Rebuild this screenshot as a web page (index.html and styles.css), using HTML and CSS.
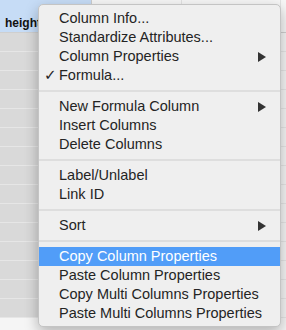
FILE: index.html
```html
<!DOCTYPE html>
<html>
<head>
    <title>Column Menu</title>
    <link rel="stylesheet" href="styles.css">
</head>
<body>
    <div class="sheet">
        <div class="row head">
            <div class="cell col-height selected">height</div>
            <div class="cell col-b"></div>
            <div class="cell col-c"></div>
            <div class="cell col-d"></div>
        </div>
        <div class="row"><div class="cell col-height"></div><div class="cell col-b"></div><div class="cell col-c"></div><div class="cell col-d"></div></div>
        <div class="row"><div class="cell col-height"></div><div class="cell col-b"></div><div class="cell col-c"></div><div class="cell col-d"></div></div>
        <div class="row"><div class="cell col-height"></div><div class="cell col-b"></div><div class="cell col-c"></div><div class="cell col-d"></div></div>
        <div class="row"><div class="cell col-height"></div><div class="cell col-b"></div><div class="cell col-c"></div><div class="cell col-d"></div></div>
        <div class="row"><div class="cell col-height"></div><div class="cell col-b"></div><div class="cell col-c"></div><div class="cell col-d"></div></div>
        <div class="row"><div class="cell col-height"></div><div class="cell col-b"></div><div class="cell col-c"></div><div class="cell col-d"></div></div>
        <div class="row"><div class="cell col-height"></div><div class="cell col-b"></div><div class="cell col-c"></div><div class="cell col-d"></div></div>
        <div class="row"><div class="cell col-height"></div><div class="cell col-b"></div><div class="cell col-c"></div><div class="cell col-d"></div></div>
        <div class="row"><div class="cell col-height"></div><div class="cell col-b"></div><div class="cell col-c"></div><div class="cell col-d"></div></div>
        <div class="row"><div class="cell col-height"></div><div class="cell col-b"></div><div class="cell col-c"></div><div class="cell col-d"></div></div>
        <div class="row"><div class="cell col-height"></div><div class="cell col-b"></div><div class="cell col-c"></div><div class="cell col-d"></div></div>
        <div class="row"><div class="cell col-height"></div><div class="cell col-b"></div><div class="cell col-c"></div><div class="cell col-d"></div></div>
        <div class="row"><div class="cell col-height"></div><div class="cell col-b"></div><div class="cell col-c"></div><div class="cell col-d"></div></div>
        <div class="row"><div class="cell col-height"></div><div class="cell col-b"></div><div class="cell col-c"></div><div class="cell col-d"></div></div>
        <div class="row"><div class="cell col-height value">142</div><div class="cell col-b"></div><div class="cell col-c"></div><div class="cell col-d"></div></div>
    </div>

    <!-- context menu over the column header -->
    <ul class="menu">
        <li class="item">Column Info...</li>
        <li class="item">Standardize Attributes...</li>
        <li class="item sub">Column Properties</li>
        <li class="item checked">Formula...</li>
        <li class="sep"></li>
        <li class="item sub">New Formula Column</li>
        <li class="item">Insert Columns</li>
        <li class="item">Delete Columns</li>
        <li class="sep"></li>
        <li class="item">Label/Unlabel</li>
        <li class="item">Link ID</li>
        <li class="sep"></li>
        <li class="item sub">Sort</li>
        <li class="sep"></li>
        <li class="item active">Copy Column Properties</li>
        <li class="item">Paste Column Properties</li>
        <li class="item">Copy Multi Columns Properties</li>
        <li class="item">Paste Multi Columns Properties</li>
    </ul>
</body>
</html>
```

FILE: styles.css
```css
/* spreadsheet behind the menu */
body {
    margin: 0;
    padding: 0;
    background: #f5f5f5;
    font-family: "Liberation Sans", Arial, sans-serif;
    overflow: hidden;
}

.sheet {
    width: 300px;
}

.row {
    display: flex;
    height: 19px;
    box-sizing: border-box;
    border-bottom: 1px solid #e6e6e6;
}

.row.head {
    height: 33px;
    border-bottom: 1px solid #cfcfcf;
}

.cell {
    box-sizing: border-box;
    border-right: 1px solid #e2e2e2;
}

.col-height {
    width: 92px;
    background: #d9d9d9;
    border-right-color: #cdcdcd;
}

.col-b {
    width: 90px;
}

.col-c {
    width: 99px;
}

.col-d {
    flex: 1;
}

.head .cell {
    background: #f6f6f6;
}

.head .selected {
    background: #c6dcf6;
    font-size: 12px;
    font-weight: bold;
    color: #111;
    padding: 16px 0 0 5px;
}

.value {
    font-size: 13px;
    color: #222;
    text-align: right;
    padding: 6px 7px 0 0;
}

/* context menu */
.menu {
    position: absolute;
    left: 38px;
    top: 4px;
    width: 243px;
    box-sizing: border-box;
    margin: 0;
    padding: 4px 0 3px;
    list-style: none;
    background: #efefef;
    border: 1px solid #c4c4c4;
    border-radius: 5px;
    box-shadow: 0 5px 14px rgba(0, 0, 0, 0.28);
    font-size: 14.5px;
    color: #242424;
}

.item {
    position: relative;
    height: 19px;
    line-height: 19px;
    padding-left: 20px;
    white-space: nowrap;
}

.item.checked::before {
    content: "\2713";
    position: absolute;
    left: 5px;
    top: 0;
    font-family: "DejaVu Sans", sans-serif;
    font-size: 15px;
}

.item.sub::after {
    content: "";
    position: absolute;
    right: 14px;
    top: 5px;
    border-left: 8px solid #333;
    border-top: 5px solid transparent;
    border-bottom: 5px solid transparent;
}

.item.active {
    background: #519df8;
    color: #fff;
}

.sep {
    height: 12px;
    position: relative;
}

.sep::before {
    content: "";
    position: absolute;
    left: 0;
    right: 0;
    top: 5px;
    height: 2px;
    background: #dedede;
}
```
